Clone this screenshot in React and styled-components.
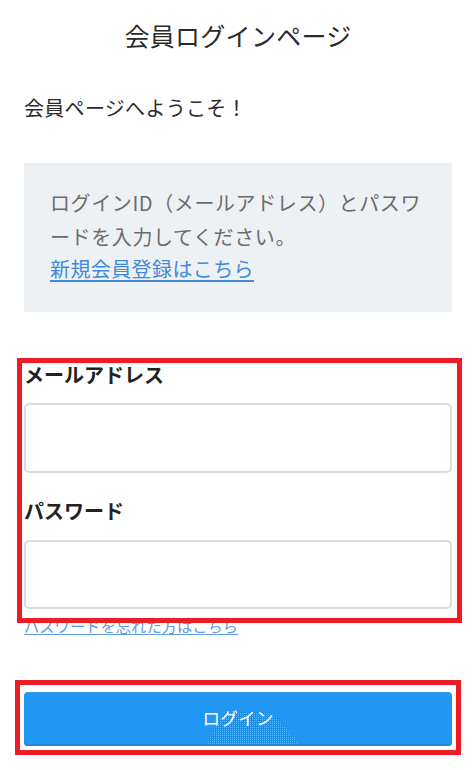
import React from "react";
import styled, { createGlobalStyle } from "styled-components";

const GlobalStyle = createGlobalStyle`
  html, body {
    margin: 0;
    padding: 0;
    background: #ffffff;
  }
  body {
    font-family: "Noto Sans CJK JP", "Noto Sans", "Liberation Sans", sans-serif;
    color: #333333;
  }
  * { box-sizing: border-box; }
`;

const Page = styled.div`
  width: 476px;
  padding: 17px 24px 24px;
  display: flex;
  flex-direction: column;
`;

const Title = styled.h1`
  margin: 0;
  font-size: 25px;
  line-height: 37px;
  font-weight: 400;
  text-align: center;
  color: #2b2b2b;
  letter-spacing: 0.3px;
`;

const Welcome = styled.p`
  margin: 39px 0 0;
  font-size: 20px;
  line-height: 30px;
  color: #2b2b2b;
  letter-spacing: 0.3px;
`;

const InfoBox = styled.div`
  margin-top: 40px;
  height: 149px;
  padding: 23px 26px 28px;
  background: #eef1f3;
  color: #6b6b6b;
  font-size: 20px;
`;

const InfoText = styled.p`
  margin: 0;
  line-height: 34px;
  letter-spacing: 0.6px;
`;

const InfoLink = styled.a`
  display: inline-block;
  line-height: 30px;
  color: #4289d8;
  letter-spacing: 0.4px;
  text-decoration: underline;
  text-underline-offset: 3px;
  text-decoration-thickness: 2px;
`;

const FormSection = styled.div`
  position: relative;
  margin-top: 48px;
  display: flex;
  flex-direction: column;
`;

const Label = styled.label`
  display: block;
  font-size: 20px;
  line-height: 30px;
  font-weight: 700;
  color: #222222;
  margin-top: ${(p) => p.$top || 0}px;
`;

const Input = styled.input`
  display: block;
  width: 100%;
  height: ${(p) => p.$h || 70}px;
  margin-top: ${(p) => p.$top || 0}px;
  border: 2px solid #d5dde2;
  border-radius: 5px;
  background: #ffffff;
  font-size: 18px;
  padding: 0 12px;
  outline: none;
`;

const Highlight = styled.div`
  position: absolute;
  top: ${(p) => p.$t}px;
  left: ${(p) => p.$l}px;
  right: ${(p) => p.$r}px;
  bottom: ${(p) => p.$b}px;
  border: 5px solid #ee1c25;
  pointer-events: none;
  z-index: 2;
`;

const ForgotLink = styled.a`
  display: block;
  margin-top: 6px;
  font-size: 15.3px;
  line-height: 20px;
  color: #5c9be0;
  text-decoration: underline;
  text-underline-offset: 2px;
  align-self: flex-start;
`;

const ButtonWrap = styled.div`
  position: relative;
  margin-top: 57px;
`;

const LoginButton = styled.button`
  position: relative;
  display: flex;
  align-items: center;
  justify-content: center;
  width: 100%;
  height: 54px;
  border: none;
  border-radius: 4px;
  background: #2196f3;
  box-shadow: inset 0 -2px 0 #1e86d6;
  color: #ffffff;
  font-family: "Noto Sans CJK JP", "Noto Sans", sans-serif;
  font-size: 17.5px;
  letter-spacing: 0.3px;
  overflow: hidden;
  padding: 0 0 4px;
  cursor: pointer;
`;

const ButtonLabel = styled.span`
  position: relative;
  z-index: 1;
`;

const Ripple = styled.svg`
  position: absolute;
  left: 183px;
  bottom: 2px;
  width: 92px;
  height: 34px;
`;

export default function App() {
  return (
    <>
      <GlobalStyle />
      <Page>
        <Title>会員ログインページ</Title>
        <Welcome>会員ページへようこそ！</Welcome>
        <InfoBox>
          <InfoText>ログインID（メールアドレス）とパスワードを入力してください。</InfoText>
          <InfoLink href="#">新規会員登録はこちら</InfoLink>
        </InfoBox>
        <FormSection>
          <Label htmlFor="email">メールアドレス</Label>
          <Input id="email" type="email" $top={13} $h={70} />
          <Label htmlFor="password" $top={23}>パスワード</Label>
          <Input id="password" type="password" $top={14} $h={69} />
          <Highlight $t={-2} $l={-7} $r={-10} $b={-14} />
        </FormSection>
        <ForgotLink href="#">パスワードを忘れた方はこちら</ForgotLink>
        <ButtonWrap>
          <LoginButton type="button">
            <Ripple viewBox="0 0 92 34" aria-hidden="true">
              <defs>
                <pattern id="dots" width="2" height="2" patternUnits="userSpaceOnUse">
                  <rect width="2" height="2" fill="#1c8de6" />
                  <rect x="1" y="1" width="1" height="1" fill="#45c6f4" />
                </pattern>
              </defs>
              <polygon points="0,34 14,6 22,2 60,2 70,8 92,34" fill="url(#dots)" />
            </Ripple>
            <ButtonLabel>ログイン</ButtonLabel>
          </LoginButton>
          <Highlight $t={-12} $l={-9} $r={-9} $b={-9} />
        </ButtonWrap>
      </Page>
    </>
  );
}
